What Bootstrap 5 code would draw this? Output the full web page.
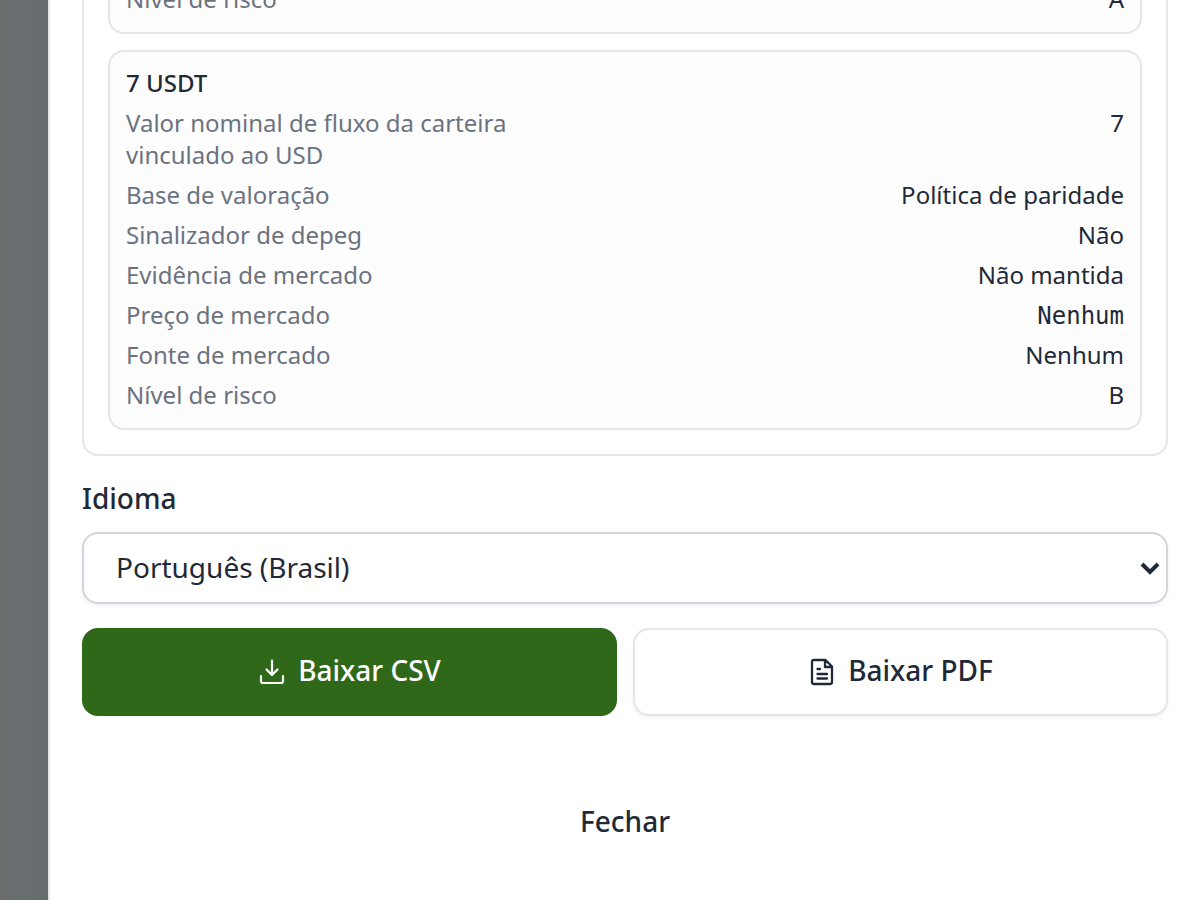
<!DOCTYPE html>
<html lang="pt-BR">
<head>
<meta charset="utf-8">
<meta name="viewport" content="width=device-width, initial-scale=1">
<title>Exportar carteira</title>
<link href="https://cdn.jsdelivr.net/npm/bootstrap@5.3.0/dist/css/bootstrap.min.css" rel="stylesheet">
<script defer src="https://cdn.jsdelivr.net/npm/bootstrap@5.3.0/dist/js/bootstrap.bundle.min.js"></script>
<style>
  body {
    font-family: "Noto Sans", sans-serif;
    font-size: 28px;
    line-height: 36px;
    color: #1f2937;
    background: linear-gradient(to right, #6b6b6d, #696e70 30%, #666b6e) 0 0 / 48px 100%;
  }
  .sheet { margin-left: 48px; padding: 0 32px 32px; border-left: 2px solid #e5e5ea; }
  .asset-group { padding: 0 24px 24px; border: 2px solid #e5e5ea; border-top: 0; border-radius: 0 0 16px 16px; }
  .asset { padding: 15px 16px 17px; border: 2px solid #e5e5ea; border-radius: 16px; background: #fdfdfd; font-size: 24px; line-height: 32px; }
  .asset-cut { padding-top: 0; border-top: 0; border-radius: 0 0 16px 16px; }
  .asset-cut .facts { margin-top: -17px; }
  .asset h2 { font-size: 24px; line-height: 32px; margin-bottom: 8px; }
  .facts { row-gap: 8px; --bs-gutter-x: 16px; }
  .facts dt { color: #6b7280; }
  .price { font-family: "DejaVu Sans Mono", monospace; padding-top: 2px; line-height: 30px; }
  .stack { gap: 24px; }
  .field { gap: 16px; }
  .language { height: 72px; padding: 0 48px 2px 32px; border: 2px solid #d1d5db; border-radius: 16px; font-size: 28px; line-height: 36px; color: #1f2937;
    background-position: right 6px center; background-size: 20px 14px; box-shadow: 0 2px 4px rgba(0,0,0,.05);
    background-image: url("data:image/svg+xml,%3Csvg xmlns='http://www.w3.org/2000/svg' viewBox='0 0 20 14'%3E%3Cpath d='M2 3l8 8 8-8' fill='none' stroke='%231f2937' stroke-width='4'/%3E%3C/svg%3E"); }
  .action { height: 88px; gap: 12px; padding: 0 24px 4px; border: 2px solid transparent; border-radius: 16px; font-size: 28px; line-height: 36px; --bs-btn-color: #1f2937; }
  .action-csv { --bs-btn-color: #fff; --bs-btn-bg: #2f6819; --bs-btn-hover-color: #fff; --bs-btn-hover-bg: #285a15; border-color: #2f6819; }
  .action-pdf { --bs-btn-bg: #fff; border-color: #e5e5ea; box-shadow: 0 2px 4px rgba(0,0,0,.05); }
  .action svg { width: 28px; height: 28px; margin-top: 4px; fill: none; stroke: currentColor; stroke-width: 2; stroke-linecap: round; stroke-linejoin: round; }
  .dismiss { margin-top: 38px; padding-bottom: 2px; }
</style>
</head>
<body class="min-vh-100 d-flex">
<main class="sheet bg-white flex-grow-1 min-vh-100 d-flex flex-column stack">
  <section class="asset-group d-flex flex-column gap-3">
    <article class="asset asset-cut overflow-hidden">
      <dl class="facts row mb-0">
        <dt class="col-6 fw-normal">Nível de risco</dt><dd class="col-6 mb-0 text-end">A</dd>
      </dl>
    </article>
    <article class="asset">
      <h2 class="fw-medium">7 USDT</h2>
      <dl class="facts row mb-0">
        <dt class="col-6 fw-normal">Valor nominal de fluxo da carteira vinculado ao USD</dt><dd class="col-6 mb-0 text-end">7</dd>
        <dt class="col-6 fw-normal">Base de valoração</dt><dd class="col-6 mb-0 text-end">Política de paridade</dd>
        <dt class="col-6 fw-normal">Sinalizador de depeg</dt><dd class="col-6 mb-0 text-end">Não</dd>
        <dt class="col-6 fw-normal">Evidência de mercado</dt><dd class="col-6 mb-0 text-end">Não mantida</dd>
        <dt class="col-6 fw-normal">Preço de mercado</dt><dd class="col-6 mb-0 text-end price">Nenhum</dd>
        <dt class="col-6 fw-normal">Fonte de mercado</dt><dd class="col-6 mb-0 text-end">Nenhum</dd>
        <dt class="col-6 fw-normal">Nível de risco</dt><dd class="col-6 mb-0 text-end">B</dd>
      </dl>
    </article>
  </section>
  <div class="field d-flex flex-column">
    <label for="language" class="fw-medium">Idioma</label>
    <select id="language" class="form-select language"><option>Português (Brasil)</option></select>
  </div>
  <div class="d-flex gap-3">
    <button type="button" class="btn action action-csv fw-medium w-50 d-flex align-items-center justify-content-center">
      <svg viewBox="0 0 28 28" aria-hidden="true"><path d="M14 2.5v14.500M8.5 11.5l5.5 5.5 5.5-5.5M3 18v5a2 2 0 0 0 2 2h18a2 2 0 0 0 2-2v-5" stroke-width="2.2"/></svg>Baixar CSV
    </button>
    <button type="button" class="btn action action-pdf fw-medium w-50 d-flex align-items-center justify-content-center">
      <svg viewBox="0 0 28 28" aria-hidden="true"><path d="M17.5 2H6a2 2 0 0 0-2 2v20a2 2 0 0 0 2 2h16a2 2 0 0 0 2-2V8.5zM17 2v7h7M9.5 11h2.5M9.5 16h9.5M9.5 20.5h9.5" stroke-width="2.3"/></svg>Baixar PDF
    </button>
  </div>
  <button type="button" class="btn action dismiss fw-medium w-100">Fechar</button>
</main>
</body>
</html>
